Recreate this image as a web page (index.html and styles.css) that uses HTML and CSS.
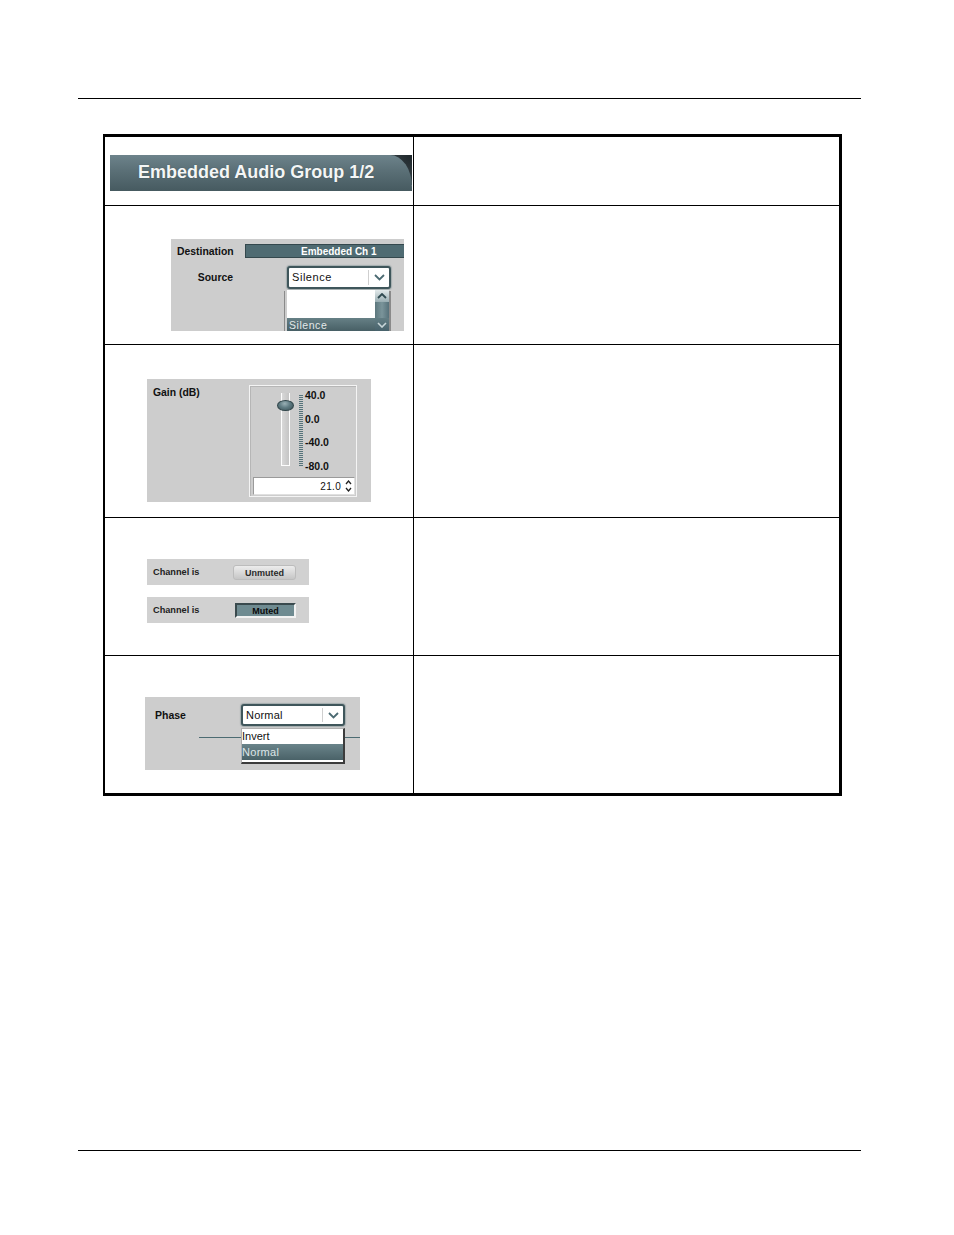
FILE: index.html
```html
<!DOCTYPE html>
<html>
<head>
<meta charset="utf-8">
<title>Embedded Audio Group</title>
<link rel="stylesheet" href="styles.css">
</head>
<body>
<div class="page">
  <div class="rule top"></div>
  <div class="tbl">
    <div class="row r1">
      <div class="cell-l">
        <div class="banner-wrap"><div class="banner">Embedded Audio Group 1/2</div></div>
      </div>
      <div class="cell-r"></div>
    </div>
    <div class="row r2">
      <div class="cell-l">
        <div class="panel src-panel">
          <div class="src-line">
            <span class="lbl lbl-col">Destination</span>
            <div class="dest-bar">Embedded Ch 1</div>
          </div>
          <div class="src-line second">
            <span class="lbl lbl-col right">Source</span>
            <div class="dd">
              <span class="val spaced">Silence</span>
              <span class="btn"><svg width="11" height="7" viewBox="0 0 11 7"><path d="M1 1 L5.5 5.5 L10 1" fill="none" stroke="#4b6a72" stroke-width="1.8"/></svg></span>
            </div>
          </div>
          <div class="frame-behind"></div>
          <div class="list-src">
            <div class="items">
              <div class="item-hl spaced">Silence</div>
            </div>
            <div class="sb">
              <div class="sb-up"><svg width="10" height="6" viewBox="0 0 10 6"><path d="M1 5 L5 1 L9 5" fill="none" stroke="#2f4a50" stroke-width="1.8"/></svg></div>
              <div class="sb-thumb"></div>
              <div class="sb-down"><svg width="10" height="6" viewBox="0 0 10 6"><path d="M1 1 L5 5 L9 1" fill="none" stroke="#c9d6d9" stroke-width="1.6"/></svg></div>
            </div>
          </div>
        </div>
      </div>
      <div class="cell-r"></div>
    </div>
    <div class="row r3">
      <div class="cell-l">
        <div class="panel gain-panel">
          <span class="lbl gain-lbl">Gain (dB)</span>
          <div class="gain-box">
            <div class="slider">
              <div class="track"><div class="knob"></div></div>
              <div class="ticks"></div>
              <div class="scale">
                <div>40.0</div>
                <div>0.0</div>
                <div>-40.0</div>
                <div>-80.0</div>
              </div>
            </div>
            <div class="spin">
              <span class="spin-val">21.0</span>
              <span class="spin-arrows">
                <svg width="7" height="5" viewBox="0 0 7 5"><path d="M1 4 L3.5 1 L6 4" fill="none" stroke="#222" stroke-width="1.3"/></svg>
                <svg width="7" height="5" viewBox="0 0 7 5"><path d="M1 1 L3.5 4 L6 1" fill="none" stroke="#222" stroke-width="1.3"/></svg>
              </span>
            </div>
          </div>
        </div>
      </div>
      <div class="cell-r"></div>
    </div>
    <div class="row r4">
      <div class="cell-l">
        <div class="panel chan">
          <span class="lbl chan-lbl">Channel is</span>
          <span class="btn-unmuted">Unmuted</span>
        </div>
        <div class="panel chan second">
          <span class="lbl chan-lbl wide">Channel is</span>
          <span class="btn-muted">Muted</span>
        </div>
      </div>
      <div class="cell-r"></div>
    </div>
    <div class="row r5">
      <div class="cell-l">
        <div class="panel phase-panel">
          <div class="ph-line"></div>
          <span class="lbl ph-lbl">Phase</span>
          <div class="dd ph-dd">
            <span class="val">Normal</span>
            <span class="btn"><svg width="11" height="7" viewBox="0 0 11 7"><path d="M1 1 L5.5 5.5 L10 1" fill="none" stroke="#4b6a72" stroke-width="1.8"/></svg></span>
          </div>
          <div class="list-ph">
            <div class="ph-item">Invert</div>
            <div class="ph-item hl">Normal</div>
          </div>
        </div>
      </div>
      <div class="cell-r"></div>
    </div>
  </div>
  <div class="rule bottom"></div>
</div>
</body>
</html>
```
FILE: styles.css
```css
html, body {
  margin: 0;
  padding: 0;
  background: #fff;
}
body {
  font-family: "Liberation Sans", Arial, sans-serif;
  color: #000;
}
.page {
  width: 954px;
  height: 1235px;
  overflow: hidden;
}
.rule {
  margin-left: 78px;
  width: 783px;
  height: 0;
  border-top: 1px solid #000;
}
.rule.top { margin-top: 98px; }
.rule.bottom { margin-top: 354px; }

.tbl {
  margin: 35px 0 0 103px;
  width: 734px;
  border: 3px solid #000;
  border-left-width: 2px;
}
.row {
  display: grid;
  grid-template-columns: 309px 425px;
  border-top: 1px solid #000;
}
.row.r1 { border-top: 0; height: 68px; }
.row.r2 { height: 138px; }
.row.r3 { height: 172px; }
.row.r4 { height: 137px; }
.row.r5 { height: 137px; }
.cell-l {
  border-right: 1px solid #000;
  box-sizing: border-box;
  overflow: hidden;
}

/* banner */
.banner-wrap {
  margin: 18px 0 0 5px;
  width: 302px;
  height: 36px;
  background: radial-gradient(circle at 100% 0%, #1f272b 0%, #364146 70%) no-repeat right top / 22px 30px;
}
.banner {
  height: 36px;
  box-sizing: border-box;
  padding-left: 28px;
  border-top-right-radius: 22px 32px;
  background: linear-gradient(180deg, #6d838b 0%, #5a6f76 45%, #465a60 100%);
  color: #f4f6f6;
  font-weight: bold;
  font-size: 18px;
  line-height: 34px;
  text-shadow: 0 0 1px rgba(0,0,0,0.4);
}

.panel {
  background: #cdcdcd;
  position: relative;
}
.lbl {
  font-weight: bold;
  font-size: 10.4px;
  color: #111;
  white-space: nowrap;
}
.spaced { letter-spacing: 0.55px; }

/* source panel */
.src-panel {
  width: 233px;
  height: 92px;
  margin: 33px 0 0 66px;
  box-sizing: border-box;
  padding-top: 5px;
  overflow: hidden;
}
.src-line {
  display: flex;
  align-items: center;
}
.src-line.second { margin-top: 8px; }
.lbl-col {
  width: 56px;
  padding-left: 6px;
  display: inline-block;
}
.lbl-col.right { text-align: right; }
.dest-bar {
  margin-left: 12px;
  flex: 1;
  height: 14px;
  box-sizing: border-box;
  border: 1px solid #34484d;
  border-right: 0;
  background: #4f6b72;
  color: #fff;
  font-weight: bold;
  font-size: 10px;
  line-height: 14px;
  padding-left: 55px;
}
.dd {
  display: flex;
  width: 104px;
  height: 23px;
  box-sizing: border-box;
  border: 2px solid #3f565b;
  border-radius: 3px;
  background: #fff;
  box-shadow: 0 0 1px 1px rgba(90,115,120,0.35);
}
.src-line .dd { margin-left: 54px; }
.dd .val {
  flex: 1;
  padding-left: 3px;
  font-size: 11px;
  line-height: 19px;
  color: #111;
}
.dd .btn {
  width: 20px;
  margin: 2px 0;
  border-left: 1px solid #cfcfcf;
  display: flex;
  align-items: center;
  justify-content: center;
}
.frame-behind {
  position: absolute;
  left: 113px;
  top: 52px;
  width: 107px;
  height: 44px;
  box-sizing: border-box;
  border-left: 1px solid #8a8a8a;
  border-right: 2px solid #8a8a8a;
}
.list-src {
  position: absolute;
  left: 116px;
  top: 51px;
  width: 102px;
  height: 50px;
  background: #fff;
  display: flex;
}
.list-src .items {
  flex: 1;
  padding-top: 28px;
}
.item-hl {
  height: 14px;
  background: linear-gradient(#668086, #455d63);
  color: #e3e9ea;
  font-size: 10.5px;
  line-height: 14px;
  padding-left: 2px;
}
.sb {
  width: 14px;
  display: flex;
  flex-direction: column;
}
.sb-up {
  height: 12px;
  background: linear-gradient(#e3eaeb, #98adb2);
  display: flex;
  align-items: center;
  justify-content: center;
}
.sb-thumb {
  height: 16px;
  background: linear-gradient(90deg, #5c777d, #7a949a, #56717a);
}
.sb-down {
  height: 14px;
  background: linear-gradient(#627d83, #46606a);
  display: flex;
  align-items: center;
  justify-content: center;
}

/* gain panel */
.gain-panel {
  width: 224px;
  height: 123px;
  margin: 34px 0 0 42px;
  display: flex;
  align-items: flex-start;
}
.gain-lbl {
  padding: 7px 0 0 6px;
  width: 96px;
  line-height: 13px;
}
.gain-box {
  margin-top: 6px;
  width: 108px;
  height: 112px;
  box-sizing: border-box;
  border: 1px solid #f4f4f4;
  box-shadow: inset 1px 1px 0 #b6b6b6;
}
.slider {
  display: flex;
  height: 88px;
}
.track {
  position: relative;
  margin: 7px 0 0 31px;
  width: 9px;
  height: 73px;
  box-sizing: border-box;
  border-left: 1px solid #fdfdfd;
  border-right: 1px solid #fdfdfd;
  border-bottom: 1px solid #fdfdfd;
  background: linear-gradient(90deg, #d8d8d8, #c4c4c4);
}
.knob {
  position: absolute;
  left: -5px;
  top: 7px;
  width: 17px;
  height: 11px;
  box-sizing: border-box;
  border-radius: 50%;
  border: 1px solid #2f4449;
  background: radial-gradient(ellipse at 45% 30%, #9ab0b5 0%, #5f7b82 45%, #3a5056 100%);
}
.ticks {
  margin: 9px 0 0 8px;
  width: 5px;
  height: 72px;
  background: repeating-linear-gradient(180deg, #55737a 0 1px, transparent 1px 2px);
  background-size: 4px 100%;
  background-repeat: no-repeat;
  background-position: right top;
}
.scale {
  margin: -2px 0 0 2px;
  font-weight: bold;
  font-size: 10.5px;
  line-height: 23.7px;
  color: #111;
}
.spin {
  margin: 3px 0 0 3px;
  width: 102px;
  height: 18px;
  box-sizing: border-box;
  background: #fff;
  border: 1px solid #9a9a9a;
  border-right-color: #e0e0e0;
  border-bottom-color: #e0e0e0;
  display: flex;
  align-items: center;
}
.spin-val {
  flex: 1;
  text-align: right;
  font-size: 10px;
  color: #111;
  padding-right: 2px;
  letter-spacing: 0.3px;
}
.spin-arrows {
  width: 11px;
  display: flex;
  flex-direction: column;
  align-items: center;
  gap: 2px;
}
.spin-arrows svg { display: block; }

/* channel panels */
.chan {
  width: 162px;
  height: 26px;
  margin: 41px 0 0 42px;
  display: flex;
  align-items: center;
  background: #d1d1d1;
}
.chan.second { margin-top: 12px; }
.chan-lbl {
  font-size: 9.2px;
  width: 80px;
  padding-left: 6px;
  color: #222;
}
.chan-lbl.wide { width: 82px; }
.btn-unmuted {
  width: 63px;
  height: 15px;
  box-sizing: border-box;
  border: 1px solid #bcbcbc;
  border-radius: 3px;
  background: linear-gradient(#ececec, #c6c6c6);
  text-align: center;
  font-weight: bold;
  font-size: 9px;
  line-height: 14px;
  color: #2a2a2a;
}
.btn-muted {
  width: 61px;
  height: 15px;
  box-sizing: border-box;
  border: 2px solid #3a4a4e;
  border-right-color: #f2f2f2;
  border-bottom-color: #f2f2f2;
  background: #6f8b91;
  text-align: center;
  font-weight: bold;
  font-size: 9px;
  line-height: 12px;
  color: #0a0a0a;
}

/* phase panel */
.phase-panel {
  width: 215px;
  height: 73px;
  margin: 41px 0 0 40px;
  box-sizing: border-box;
  padding-top: 7px;
  display: flex;
  align-items: flex-start;
}
.ph-lbl {
  width: 86px;
  padding-left: 10px;
  line-height: 22px;
  font-size: 10.5px;
}
.ph-line {
  position: absolute;
  left: 54px;
  right: 0;
  top: 40px;
  height: 1px;
  background: #4c6b72;
}
.ph-dd { height: 22px; }
.ph-dd .val { line-height: 18px; letter-spacing: 0.2px; }
.list-ph {
  position: absolute;
  left: 96px;
  top: 31px;
  width: 104px;
  height: 36px;
  box-sizing: border-box;
  background: #fff;
  border-top: 1px solid #b0b0b0;
  border-left: 1px solid #b0b0b0;
  border-right: 2px solid #3c3c3c;
  border-bottom: 2px solid #3c3c3c;
}
.ph-item {
  height: 15px;
  font-size: 11px;
  line-height: 15px;
  color: #111;
}
.ph-item.hl {
  height: 16px;
  line-height: 16px;
  background: linear-gradient(#6a848a, #4a6268);
  color: #dfe6e8;
  letter-spacing: 0.3px;
}
```
